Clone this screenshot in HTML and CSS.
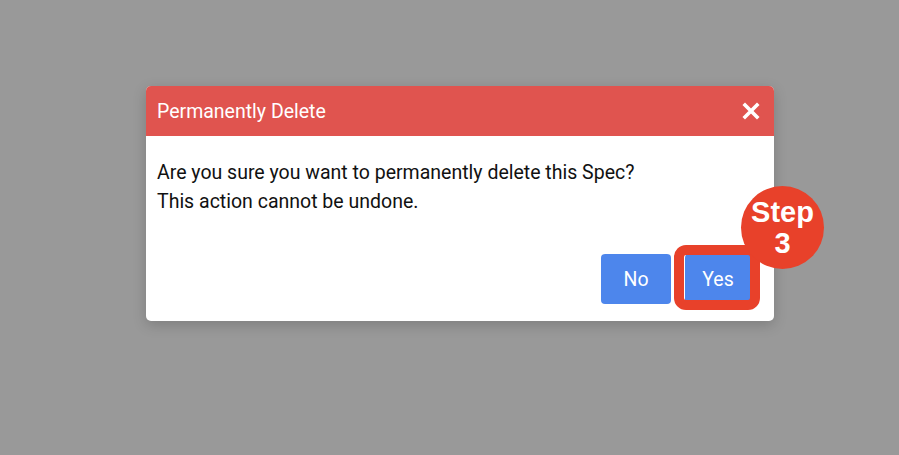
FILE: index.html
```html
<!DOCTYPE html>
<html>
<head>
<meta charset="utf-8">
<link rel="stylesheet" href="styles.css">
</head>
<body>
<div class="page">
  <div class="dialog">
    <div class="dialog-header">
      <span class="dialog-title">Permanently Delete</span>
      <svg class="close" width="18" height="18" viewBox="0 0 18 18"><path d="M3 3 L15 15 M15 3 L3 15" stroke="#fff" stroke-width="3.6" stroke-linecap="square"/></svg>
    </div>
    <div class="dialog-body">
      <p>Are you sure you want to permanently delete this Spec?</p>
      <p>This action cannot be undone.</p>
    </div>
    <div class="dialog-footer">
      <button class="btn">No</button>
      <div class="yes-wrap">
        <button class="btn btn-yes">Yes</button>
        <div class="highlight"></div>
        <div class="step">Step<br>3</div>
      </div>
    </div>
  </div>
</div>
</body>
</html>
```
FILE: styles.css
```css
html, body {
  margin: 0;
  padding: 0;
  background: #999999;
  height: 100%;
}
.page {
  padding: 86px 0 0 146px;
  font-family: Roboto, "Liberation Sans", sans-serif;
}
.dialog {
  width: 628px;
  background: #fff;
  border-radius: 5px;
  box-shadow: 0 4px 14px rgba(0,0,0,0.18);
}
.dialog-header {
  height: 50px;
  background: #e0544f;
  border-radius: 5px 5px 0 0;
  display: flex;
  align-items: center;
  justify-content: space-between;
  padding: 0 14px 0 11px;
  color: #fff;
}
.dialog-title {
  font-size: 19.5px;
}
.close {
  display: block;
}
.dialog-body {
  padding: 22px 11px 0 11px;
  font-size: 19.5px;
  color: #111;
}
.dialog-body p {
  margin: 0;
  line-height: 29px;
}
.dialog-footer {
  display: flex;
  justify-content: flex-end;
  gap: 14px;
  padding: 38px 23px 17px 0;
}
.btn {
  width: 70px;
  height: 50px;
  border: none;
  border-radius: 4px;
  background: #4d86ec;
  color: #fff;
  font-family: Roboto, "Liberation Sans", sans-serif;
  font-size: 19.5px;
  padding: 0;
}
.yes-wrap {
  position: relative;
}
.btn-yes {
  width: 66px;
  display: block;
}
.highlight {
  position: absolute;
  left: -11px;
  top: -9px;
  width: 86px;
  height: 65px;
  box-sizing: border-box;
  border: 10px solid #e8412a;
  border-radius: 12px;
}
.step {
  position: absolute;
  left: 56px;
  top: -68px;
  width: 83px;
  height: 83px;
  border-radius: 50%;
  background: #e8412a;
  color: #fff;
  font-family: "Liberation Sans", Arial, sans-serif;
  font-weight: bold;
  font-size: 29px;
  line-height: 31px;
  text-align: center;
  display: flex;
  align-items: center;
  justify-content: center;
}
```
